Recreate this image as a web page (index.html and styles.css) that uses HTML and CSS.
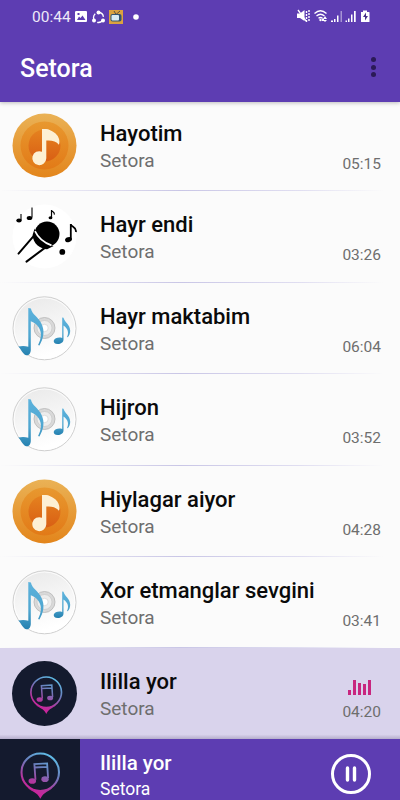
FILE: index.html
```html
<!DOCTYPE html>
<html lang="uz">
  <head>
    <meta charset="UTF-8" />
    <meta name="viewport" content="width=device-width, initial-scale=1.0" />
    <title>Setora</title>
    <link rel="stylesheet" href="styles.css" />
  </head>
  <body>
    <!-- shared cover art -->
    <svg class="sprite" width="0" height="0">
      <defs>
        <linearGradient id="orange-outer" x1="0" y1="0" x2="0" y2="1">
          <stop offset="0" stop-color="#eab256" />
          <stop offset="1" stop-color="#e3851b" />
        </linearGradient>
        <linearGradient id="orange-mid" x1="0" y1="0" x2="0" y2="1">
          <stop offset="0" stop-color="#e8982f" />
          <stop offset="1" stop-color="#e27a17" />
        </linearGradient>
        <linearGradient id="orange-inner" x1="0" y1="0" x2="0" y2="1">
          <stop offset="0" stop-color="#e5821f" />
          <stop offset="1" stop-color="#d95f14" />
        </linearGradient>
        <linearGradient id="disc" x1="0" y1="0" x2="0.3" y2="1">
          <stop offset="0" stop-color="#e8e8e8" />
          <stop offset="0.5" stop-color="#f4f4f4" />
          <stop offset="1" stop-color="#ffffff" />
        </linearGradient>
        <linearGradient id="blue-note" x1="0" y1="0" x2="0" y2="1">
          <stop offset="0" stop-color="#5cb2dc" />
          <stop offset="0.6" stop-color="#4fa6d0" />
          <stop offset="1" stop-color="#2581b0" />
        </linearGradient>
        <linearGradient id="neon" gradientUnits="userSpaceOnUse" x1="24" y1="50" x2="42" y2="17">
          <stop offset="0" stop-color="#d81b9a" />
          <stop offset="0.3" stop-color="#b0389f" />
          <stop offset="0.65" stop-color="#697fbd" />
          <stop offset="1" stop-color="#5fc0ea" />
        </linearGradient>
      </defs>
      <symbol id="cover-orange" viewBox="0 0 65 65">
        <circle cx="32.5" cy="32.5" r="32" fill="url(#orange-outer)" />
        <circle cx="32.5" cy="32.5" r="24" fill="url(#orange-mid)" />
        <circle cx="32.5" cy="32.5" r="16" fill="url(#orange-inner)" />
        <path
          fill="#fdf0d4"
          d="M30 16h4.300c2 .300 5.500 1.300 9 4.300 4 3.500 5 8.500 3.600 11.500-2.500-3.500-7.500-4.700-12.600-4.200v17.700a7 7 0 1 1-4.300-6.600z"
        />
      </symbol>
      <symbol id="cover-mic" viewBox="0 0 65 65">
        <circle cx="32.5" cy="32.5" r="32" fill="#fff" />
        <g transform="translate(0 2.6)">
          <g stroke="#000" stroke-width="2" stroke-linecap="round" fill="none">
            <path d="M22 29 6.500 47" />
            <path d="M32.500 41.500 14.500 55" />
          </g>
          <circle cx="35" cy="27.500" r="12.500" />
          <path d="M20.600 28.500l2-6.500c1.500 8 8.500 16 19 17.500l-6.500 3.200C28 42.500 21 37 20.600 28.500z" />
          <path d="M23 24.500c3 6.500 9 11.500 16.500 14.300" stroke="#fff" stroke-width="1.700" fill="none" />
          <circle cx="50.300" cy="45.300" r="2.900" />
          <g stroke="#000" fill="none">
            <path d="M58.800 33V17.500c0 3 6.500 3 5 8" stroke-width="1.800" />
            <path d="M39.500 11V3.500c.5 2 3.500 1.700 2.800 4.500" stroke-width="1.200" />
            <path d="M9 13.500V7.500M20 11V1" stroke-width="1.100" />
          </g>
          <ellipse cx="56.500" cy="33" rx="3.500" ry="2.500" transform="rotate(-18 56.500 33)" />
          <ellipse cx="38.500" cy="11.200" rx="1.900" ry="1.500" />
          <ellipse cx="7" cy="14" rx="2.700" ry="2" />
          <ellipse cx="17.500" cy="11.400" rx="2.800" ry="2" />
        </g>
      </symbol>
      <symbol id="cover-disc" viewBox="0 0 65 65">
        <circle cx="32.500" cy="32.300" r="31.500" fill="url(#disc)" stroke="#cfcfcf" stroke-width="1" />
        <circle cx="32.500" cy="32.300" r="30.300" fill="none" stroke="#fff" stroke-width=".8" />
        <circle cx="32.500" cy="32" r="10.500" fill="#d9d9d9" stroke="#b5b5b5" stroke-width=".8" />
        <circle cx="32.500" cy="32" r="7.500" fill="#ededed" stroke="#c9c9c9" stroke-width=".7" />
        <circle cx="32.500" cy="32" r="3.700" fill="#fff" stroke="#d2d2d2" stroke-width=".7" />
        <path
          fill="url(#blue-note)"
          d="M16.300 12l2.600.6c1 6 7.600 8.500 10.700 15.400 3.300 7 2 14.500-2.200 21.500l-1.300-.5c3.300-6.700 4-12.500.7-17.500-2-3.500-5-5.300-8-6.300v28.500c0 4-2.500 6.300-4.700 5.500-3.500-1-4.500-5.500-7.800-8.700 3.500-.8 7-.8 10 .3z"
        />
        <path
          fill="url(#blue-note)"
          d="M50.200 21.500l1.300.3c1 4.500 6.500 6.500 6.700 13 0 3-1 5-2.500 6.500l-.6-.4c1.700-4 1.300-8-3.600-11.400v14c0 3-3 4.600-5.700 4.500-3 0-4.500-1.800-4-3.600.8-2.500 5-3.500 8.400-2.500z"
        />
      </symbol>
      <symbol id="neon-note" viewBox="16 14 34 40">
        <circle cx="33.200" cy="31.300" r="15.300" fill="none" stroke="url(#neon)" stroke-width="1.700" />
        <path fill="url(#neon)" d="M22.500 43.500c5 4.200 15.500 4.200 21 0-3 3.700-7.500 3.500-10.200 9.500-2.700-6-7.500-5.800-10.800-9.500z" />
        <path fill="none" stroke="url(#neon)" stroke-width="1.500" d="M29.300 37.500l-.9-12.800 10.400-.6.800 12M28.600 27.500l10.300-.6" />
        <ellipse cx="26.700" cy="38.500" rx="3.100" ry="2.300" fill="url(#neon)" />
        <ellipse cx="37.100" cy="37" rx="3" ry="2.300" fill="url(#neon)" />
      </symbol>
    </svg>

    <div class="app">
      <header class="header">
        <div class="status">
          <span class="clock">00:44</span>
          <svg class="notices" width="64" height="16" viewBox="0 0 64 16">
            <path fill="#fff" fill-rule="evenodd" d="M1.500 2h9.500q1 0 1 1v9q0 1-1 1H1q-1 0-1-1V3q0-1 1.500-1zM2 11h8.500L7.500 6.500 5.500 9 4 7.500zM2.500 4v2h2V4z" />
            <circle cx="23.500" cy="8.500" r="5" fill="none" stroke="#fff" stroke-width="1.300" stroke-dasharray="7 3.470" stroke-dashoffset="-2" />
            <circle cx="23.500" cy="3.500" r="2" fill="#fff" />
            <circle cx="19" cy="11.500" r="2" fill="#fff" />
            <circle cx="28" cy="11.500" r="2" fill="#fff" />
            <rect x="34" y="1" width="14" height="14" fill="#dba23f" />
            <path d="M39 2l2 3.500L45 2" stroke="#59503f" fill="none" />
            <rect x="35.500" y="5" width="11" height="7.500" rx="2" fill="#34546f" />
            <rect x="36.500" y="6" width="7.500" height="5.500" rx="1" fill="#d9ebf2" />
            <circle cx="61" cy="8" r="2.800" fill="#fff" />
          </svg>
          <svg class="signals" width="74" height="16" viewBox="0 0 74 16">
            <path fill="#fff" d="M0 5.500h3L7.500 2v11L3 10H0z" />
            <path d="M1 2l8 11" stroke="#fff" stroke-width="1.300" />
            <path d="M9.500 3v11M12 2v12" stroke="#fff" stroke-width="1.400" stroke-dasharray="2 1" />
            <g fill="none" stroke="#fff" stroke-width="1.300">
              <path d="M17.500 5.500q6-5.500 12 0M19.500 8q4-3.500 8 0M21.500 10.300q2-1.600 4 0" />
            </g>
            <circle cx="23.500" cy="12" r="1.200" fill="#fff" />
            <path fill="#fff" d="M25 10.500h2v2.500h-2zM28 8l2 3h-4zM26 12h4l-2 2z" />
            <path fill="#fff" d="M34 12.500h2V14h-2zM37 11h1.500v3H37zM40 7.500h1.500V14H40zM48.500 12.500h1.500V14h-1.500zM51 10.500h1.500V14H51zM54 6.500h1.500V14H54zM57 3h1.700v11H57z" />
            <path fill="#fff" opacity=".45" d="M43.500 3H45v11h-1.500z" />
            <path fill="#fff" d="M64 4h2V2.500h4V4h2q.5 0 .5.500v9q0 .5-.5.500h-7.500q-.5 0-.5-.5z" />
            <path d="M69 4.500L66 9h2v3.500L71 8h-2z" fill="#473087" />
          </svg>
        </div>
        <div class="toolbar">
          <h1>Setora</h1>
          <div class="more"><i></i><i></i><i></i></div>
        </div>
      </header>

      <main class="songs">
        <div class="song">
          <svg class="cover"><use href="#cover-orange" /></svg>
          <div class="info">
            <h2>Hayotim</h2>
            <p>Setora</p>
          </div>
          <span class="time">05:15</span>
        </div>
        <div class="song">
          <svg class="cover"><use href="#cover-mic" /></svg>
          <div class="info">
            <h2>Hayr endi</h2>
            <p>Setora</p>
          </div>
          <span class="time">03:26</span>
        </div>
        <div class="song">
          <svg class="cover"><use href="#cover-disc" /></svg>
          <div class="info">
            <h2>Hayr maktabim</h2>
            <p>Setora</p>
          </div>
          <span class="time">06:04</span>
        </div>
        <div class="song">
          <svg class="cover"><use href="#cover-disc" /></svg>
          <div class="info">
            <h2>Hijron</h2>
            <p>Setora</p>
          </div>
          <span class="time">03:52</span>
        </div>
        <div class="song">
          <svg class="cover"><use href="#cover-orange" /></svg>
          <div class="info">
            <h2>Hiylagar aiyor</h2>
            <p>Setora</p>
          </div>
          <span class="time">04:28</span>
        </div>
        <div class="song">
          <svg class="cover"><use href="#cover-disc" /></svg>
          <div class="info">
            <h2>Xor etmanglar sevgini</h2>
            <p>Setora</p>
          </div>
          <span class="time">03:41</span>
        </div>
        <div class="song active">
          <div class="cover dark">
            <svg width="34" height="40"><use href="#neon-note" /></svg>
          </div>
          <div class="info">
            <h2>Ililla yor</h2>
            <p>Setora</p>
          </div>
          <div class="time">
            <svg class="equalizer" width="23" height="15" viewBox="0 0 23 15" fill="#c8267f">
              <path d="M0 10h3v5H0zM5 0h3v15H5zM10 3h3v12h-3zM15 4h3v11h-3zM20 0h3v15h-3z" />
            </svg>
            04:20
          </div>
        </div>
      </main>

      <footer class="player">
        <div class="player-cover">
          <svg width="42" height="49"><use href="#neon-note" /></svg>
        </div>
        <div class="player-info">
          <h2>Ililla yor</h2>
          <p>Setora</p>
        </div>
        <svg class="pause" width="40" height="40" viewBox="0 0 40 40" fill="none" stroke="#fff">
          <circle cx="20" cy="20" r="18.500" stroke-width="3" />
          <path d="M16.500 14v12M23.500 14v12" stroke-width="3.400" stroke-linecap="round" />
        </svg>
      </footer>
    </div>
  </body>
</html>
```

FILE: styles.css
```css
body {
  margin: 0;
  font-family: Roboto, sans-serif;
  background-color: #fbfbfb;
}
h1,
h2,
p {
  margin: 0;
  font-weight: 400;
}
.sprite {
  display: block;
}
.app {
  height: 800px;
  overflow: hidden;
}
.header {
  position: relative;
  height: 100px;
  color: #fff;
  background-color: #5d3db2;
  box-shadow: 0 2px 0 #5d3db2, 0 3px 4px rgba(0, 0, 0, 0.25);
}
.status {
  display: flex;
  align-items: center;
  height: 32px;
  padding: 0 29px 0 32px;
}
.clock {
  width: 43px;
  font-size: 15.5px;
  line-height: 36px;
  height: 34px;
  color: #eee9f8;
}
.notices {
  margin-top: 1px;
}
.signals {
  margin-left: auto;
}
.toolbar {
  display: flex;
  align-items: center;
  justify-content: space-between;
  height: 70px;
  padding: 0 24px 0 20px;
}
h1 {
  font-size: 25px;
  font-weight: 500;
  line-height: 30px;
  padding-top: 4px;
}
.more {
  display: grid;
  gap: 2.5px;
}
.more i {
  width: 5px;
  height: 5px;
  border-radius: 50%;
  background-color: #2b1a57;
}
.song {
  display: flex;
  box-sizing: border-box;
  height: 91.4px;
  padding: 13px 19px 0 12px;
  background: linear-gradient(90deg, #fbfbfb, #c9c6e6 45%, #e0def1 75%, #fbfbfb 96%) 0 100% / 100% 1px no-repeat;
}
.cover {
  width: 65px;
  height: 65px;
}
.dark {
  display: flex;
  align-items: center;
  justify-content: center;
  box-sizing: border-box;
  padding: 2px 0 0 2px;
  border-radius: 50%;
  background-color: #141a2e;
}
.info {
  flex: 1;
  padding: 8px 0 0 23px;
}
h2 {
  font-size: 22px;
  font-weight: 500;
  line-height: 26px;
  color: #0a0a0a;
}
.info p {
  font-size: 19px;
  line-height: 28px;
  color: #6e6e6e;
}
.time {
  display: flex;
  flex-direction: column;
  align-items: flex-end;
  justify-content: flex-end;
  height: 61px;
  font-size: 15.5px;
  line-height: 20px;
  color: #6e6e6e;
}
.equalizer {
  margin: 0 10px 7px 0;
}
.active {
  height: 90.6px;
  background: linear-gradient(#d9d3ec 95%, #b5adcb);
}
.player {
  display: flex;
  height: 61px;
  color: #fff;
  background-color: #5d3db2;
}
.player-cover {
  display: flex;
  align-items: flex-start;
  justify-content: center;
  width: 80px;
  padding-top: 12px;
  box-sizing: border-box;
  background-color: #141a2e;
}
.player-info {
  flex: 1;
  padding: 11px 0 0 20px;
}
.player-info h2 {
  font-size: 20.5px;
  color: #fff;
}
.player-info p {
  font-size: 17.5px;
  line-height: 26px;
}
.pause {
  margin: 15px 29px 0 0;
}
```
